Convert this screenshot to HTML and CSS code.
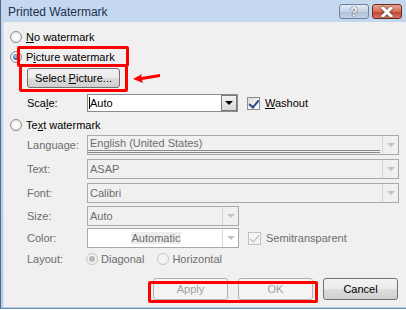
FILE: index.html
```html
<!doctype html>
<html lang="en">
<head>
    <meta charset="UTF-8">
    <title>Printed Watermark</title>
    <link rel="stylesheet" href="styles.css">
</head>
<body>
    <div class="window">
        <div class="titlebar">
            <span class="title">Printed Watermark</span>
            <span class="tbtn help">?</span>
            <span class="tbtn close">
                <svg width="14" height="10" viewBox="0 0 14 10"><path d="M3 1 L11 9 M11 1 L3 9" stroke="#fff" stroke-width="3" stroke-linecap="square"/></svg>
            </span>
        </div>
        <div class="content">
            <div class="radio-row first">
                <span class="radio"></span><span><u>N</u>o watermark</span>
            </div>
            <div class="radio-row">
                <span class="radio on"></span><span>P<u>i</u>cture watermark</span>
            </div>
            <div class="pic-row">
                <span class="btn"><span>Select <u>P</u>icture...</span></span>
            </div>
            <div class="field-row scale">
                <span class="label">Sca<u>l</u>e:</span>
                <span class="select short white"><span class="val caret">Auto</span><span class="drop"><i></i></span></span>
                <span class="check on"></span><span><u>W</u>ashout</span>
            </div>
            <div class="radio-row text-wm">
                <span class="radio"></span><span>Te<u>x</u>t watermark</span>
            </div>
            <div class="field-row dis lang-row">
                <span class="label">Language:</span>
                <span class="select wide lang"><span class="val">English (United States)</span><span class="drop"><i></i></span></span>
            </div>
            <div class="field-row dis">
                <span class="label">Text:</span>
                <span class="select wide"><span class="val">ASAP</span><span class="drop"><i></i></span></span>
            </div>
            <div class="field-row dis">
                <span class="label">Font:</span>
                <span class="select wide"><span class="val">Calibri</span><span class="drop"><i></i></span></span>
            </div>
            <div class="field-row dis size-row">
                <span class="label">Size:</span>
                <span class="select short"><span class="val">Auto</span><span class="drop"><i></i></span></span>
            </div>
            <div class="field-row dis color-row">
                <span class="label">Color:</span>
                <span class="select short white"><span class="val center"><em>Automatic</em></span><span class="drop"><i></i></span></span>
                <span class="check on dim"></span><span>Semitransparent</span>
            </div>
            <div class="field-row dis layout">
                <span class="label">Layout:</span>
                <span class="radio on dim"></span><span class="opt">Diagonal</span>
                <span class="radio dim"></span><span>Horizontal</span>
            </div>
            <div class="buttons">
                <span class="btn off">Apply</span>
                <span class="btn off">OK</span>
                <span class="btn">Cancel</span>
            </div>
        </div>

        <div class="mark m1"></div>
        <div class="mark m2"></div>
        <div class="mark m3"></div>
        <svg class="arrow" width="30" height="12" viewBox="0 0 30 12">
            <path d="M1 8 L10 3 L9 6 L28 3 L28 6 L10 9 L11 12 Z" fill="#f00"/>
        </svg>
    </div>
</body>
</html>
```

FILE: styles.css
```css
*{
    margin: 0;
    padding: 0;
    box-sizing: border-box;
}
body{
    width: 406px;
    height: 310px;
    overflow: hidden;
    background: #fff;
    font-family: "Liberation Sans", Arial, sans-serif;
    font-size: 11px;
    color: #000;
}
u{
    text-decoration: underline;
}
.window{
    position: relative;
    width: 406px;
    height: 309px;
    background: linear-gradient(#c4d9ef, #b4cbe6);
    border-left: 1px solid #566a84;
    border-bottom: 1px solid #6e8bb0;
    padding: 0 0 1px 2px;
    display: flex;
    flex-direction: column;
}
.titlebar{
    flex: none;
    height: 22px;
    display: flex;
    align-items: flex-start;
    padding: 0 4px 0 5px;
}
.title{
    flex: 1;
    font-size: 12px;
    color: #1f2f4f;
    line-height: 14px;
    margin-top: 5px;
}
.tbtn{
    height: 15px;
    width: 30px;
    margin-top: 4px;
    border: 1px solid #6e7f97;
    border-radius: 3px;
    display: flex;
    align-items: center;
    justify-content: center;
}
.help{
    background: linear-gradient(#e2ebf5 0%, #c4d4e6 50%, #aebfd6 51%, #c3d3e6 100%);
    color: #fff;
    font-weight: bold;
    font-size: 13px;
    line-height: 13px;
    text-shadow: 0 0 1px #333, 0 0 1px #333;
    margin-right: 3px;
}
.close{
    background: linear-gradient(#e8a493 0%, #d46f57 50%, #c2442a 51%, #d27560 100%);
    border-color: #6d2a1e;
}
.close svg{
    filter: drop-shadow(0 0 1px #333);
}
.content{
    flex: 1;
    background: #f0f0f0;
    border-left: 1px solid #d9e4f1;
    padding: 0 0 0 6px;
    display: flex;
    flex-direction: column;
}
.radio-row{
    display: flex;
    align-items: center;
    height: 14px;
    margin-top: 6px;
    flex: none;
}
.radio-row.first{
    margin-top: 8px;
}
.radio{
    width: 12px;
    height: 12px;
    border-radius: 50%;
    border: 1px solid #8d8d8d;
    background: radial-gradient(circle at 50% 50%, #fff 30%, #dcdcdc 100%);
    margin-right: 4px;
    position: relative;
    flex: none;
}
.radio.on::after{
    content: "";
    position: absolute;
    left: 2px;
    top: 2px;
    width: 6px;
    height: 6px;
    border-radius: 50%;
    background: radial-gradient(circle at 40% 35%, #9ad2f4, #1c5f9c 70%);
}
.radio.dim{
    border-color: #c4c4c4;
    background: #f4f4f4;
}
.radio.on.dim::after{
    background: #b8b8b8;
}
.pic-row{
    margin: 4px 0 0 17px;
    display: flex;
    flex: none;
}
.pic-row .btn{
    width: 93px;
    height: 20px;
}
.btn{
    display: flex;
    align-items: center;
    justify-content: center;
    width: 75px;
    height: 22px;
    border: 1px solid #707070;
    border-radius: 3px;
    background: linear-gradient(#f2f2f2 0%, #ebebeb 50%, #dddddd 51%, #cfcfcf 100%);
    color: #000;
}
.btn.off{
    border-color: #adb2b5;
    background: #f4f4f4;
    color: #a0a0a0;
}
.field-row{
    display: flex;
    align-items: center;
    margin-top: 4px;
    height: 20px;
    flex: none;
}
.field-row.scale{
    margin-top: 6px;
    height: 18px;
}
.lang-row{
    margin-top: 3px;
}
.size-row{
    margin-top: 3px;
}
.color-row{
    margin-top: 2px;
}
.label{
    width: 77px;
    padding-left: 17px;
    flex: none;
}
.dis{
    color: #6d6d6d;
}
.select{
    display: flex;
    height: 100%;
    border: 1px solid #a9a9a9;
    background: #f0f0f0;
    flex: none;
}
.select.wide{
    width: 312px;
}
.select.short{
    width: 152px;
}
.select.white{
    background: #fff;
}
.scale .select{
    width: 151px;
    border-color: #8b8b8b;
}
.val{
    flex: 1;
    display: flex;
    align-items: center;
    padding-left: 2px;
}
.val.caret{
    border-left: 1px solid #000;
    margin: 2px 0 2px 1px;
    padding-left: 0;
}
.val.center{
    justify-content: center;
}
.val em{
    font-style: normal;
    background: #ececec;
    padding: 0 1px;
}
.lang .val{
    border-bottom: 3px double #8a8a8a;
    margin: 0 2px 1px 0;
}
.drop{
    width: 16px;
    border-left: 1px solid #d6d6d6;
    display: flex;
    align-items: center;
    justify-content: center;
}
.drop i{
    width: 0;
    height: 0;
    border-left: 4px solid transparent;
    border-right: 4px solid transparent;
    border-top: 4px solid #c2c2c2;
}
.scale .drop{
    border: 1px solid #7a7a7a;
    background: linear-gradient(#f2f2f2, #d8d8d8);
}
.scale .drop i{
    border-top-color: #000;
}
.check{
    width: 13px;
    height: 13px;
    border: 1px solid #8e8f8f;
    background: linear-gradient(135deg, #dcdcdc, #fff);
    margin: 0 5px 0 9px;
    position: relative;
    flex: none;
}
.check.on::after{
    content: "";
    position: absolute;
    left: 3px;
    top: 0;
    width: 4px;
    height: 8px;
    border-right: 2px solid #2b4c8c;
    border-bottom: 2px solid #2b4c8c;
    transform: rotate(40deg);
}
.check.dim{
    border-color: #c2c2c2;
    background: #f4f4f4;
}
.check.dim::after{
    border-color: #b6b6b6;
    border-width: 0 1px 1px 0;
}
.field-row.layout{
    margin-top: 4px;
    height: 14px;
}
.layout .label{
    width: 76px;
}
.layout .radio{
    margin-right: 3px;
}
.layout .opt{
    margin-right: 13px;
}
.buttons{
    display: flex;
    justify-content: flex-end;
    gap: 10px;
    margin-top: 12px;
    padding-right: 8px;
    flex: none;
}

/* annotations */
.mark{
    position: absolute;
    border: 3px solid #f00;
    border-radius: 2px;
}
.m1{
    left: 16px;
    top: 46px;
    width: 112px;
    height: 21px;
}
.m2{
    left: 18px;
    top: 64px;
    width: 109px;
    height: 28px;
}
.m3{
    left: 147px;
    top: 281px;
    width: 170px;
    height: 22px;
}
.arrow{
    position: absolute;
    left: 131px;
    top: 71px;
}
```
